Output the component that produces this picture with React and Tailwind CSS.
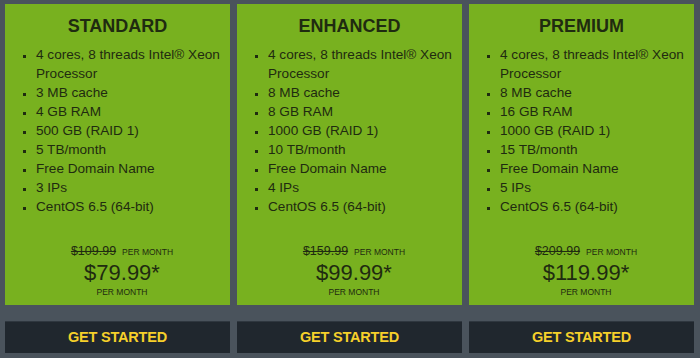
const plans = [
  {
    name: "STANDARD",
    features: [
      "4 cores, 8 threads Intel® Xeon Processor",
      "3 MB cache",
      "4 GB RAM",
      "500 GB (RAID 1)",
      "5 TB/month",
      "Free Domain Name",
      "3 IPs",
      "CentOS 6.5 (64-bit)",
    ],
    oldPrice: "$109.99",
    price: "$79.99*",
  },
  {
    name: "ENHANCED",
    features: [
      "4 cores, 8 threads Intel® Xeon Processor",
      "8 MB cache",
      "8 GB RAM",
      "1000 GB (RAID 1)",
      "10 TB/month",
      "Free Domain Name",
      "4 IPs",
      "CentOS 6.5 (64-bit)",
    ],
    oldPrice: "$159.99",
    price: "$99.99*",
  },
  {
    name: "PREMIUM",
    features: [
      "4 cores, 8 threads Intel® Xeon Processor",
      "8 MB cache",
      "16 GB RAM",
      "1000 GB (RAID 1)",
      "15 TB/month",
      "Free Domain Name",
      "5 IPs",
      "CentOS 6.5 (64-bit)",
    ],
    oldPrice: "$209.99",
    price: "$119.99*",
  },
];

const PlanColumn = ({ plan }) => (
  <div className="flex flex-col w-[225px] shrink-0">
    {/* Green card */}
    <div className="h-[301px] bg-[#78b11f] text-[#1f2b10] pt-[10px] flex flex-col">
      <h2 className="text-center text-[18px] leading-[24px] font-bold">{plan.name}</h2>
      <ul className="mt-[7px] pl-[18px] pr-0 text-[13.6px] leading-[19px]">
        {plan.features.map((f) => (
          <li key={f} className="flex">
            <span className="w-[13px] shrink-0">
              <span className="block w-[3px] h-[3px] bg-[#1f2b10] mt-[10px]" />
            </span>
            <span>{f}</span>
          </li>
        ))}
      </ul>

      {/* Pricing */}
      <div className="mt-[27px] pl-[9px] flex flex-col items-center">
        <div className="flex items-baseline gap-[6px] leading-[16px]">
          <span className="text-[12.5px] line-through">{plan.oldPrice}</span>
          <span className="text-[8.5px] uppercase">Per month</span>
        </div>
        <div className="text-[22px] leading-[26px]">{plan.price}</div>
        <div className="text-[8.5px] leading-[12px] uppercase">Per month</div>
      </div>
    </div>

    {/* Button */}
    <button className="mt-[16px] h-[32px] bg-[#20272e] border-t border-[#2f373f] text-[#f6d02a] text-[14.5px] font-bold tracking-[-0.2px]">
      GET STARTED
    </button>
  </div>
);

const App = () => (
  <div
    className="w-[700px] h-[358px] bg-[#4a535c] flex gap-[7px] pl-[5px] pt-[4px] overflow-hidden"
    style={{ fontFamily: '"Liberation Sans", Arial, sans-serif' }}
  >
    {plans.map((p) => (
      <PlanColumn key={p.name} plan={p} />
    ))}
  </div>
);

export default App;
